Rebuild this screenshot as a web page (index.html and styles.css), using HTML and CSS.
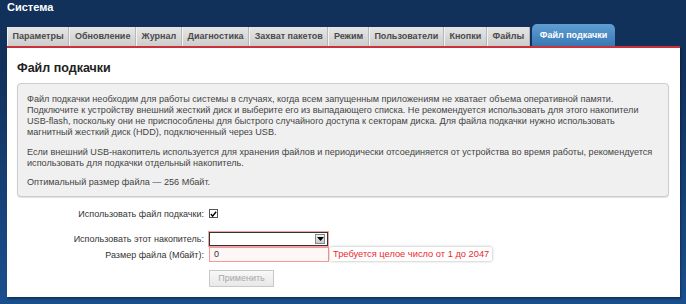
FILE: index.html
```html
<!DOCTYPE html>
<html lang="ru">
<head>
<meta charset="utf-8">
<title>Система</title>
<link rel="stylesheet" href="styles.css">
</head>
<body>
<div class="page">
  <h1 class="title">Система</h1>
  <nav class="tabs">
    <span class="tab">Параметры</span>
    <span class="tab">Обновление</span>
    <span class="tab">Журнал</span>
    <span class="tab">Диагностика</span>
    <span class="tab">Захват пакетов</span>
    <span class="tab">Режим</span>
    <span class="tab">Пользователи</span>
    <span class="tab">Кнопки</span>
    <span class="tab">Файлы</span>
    <span class="tab tab-active">Файл подкачки</span>
  </nav>
  <div class="panel">
    <h2 class="heading">Файл подкачки</h2>
    <div class="info">
      <p>Файл подкачки необходим для работы системы в случаях, когда всем запущенным приложениям не хватает объема оперативной памяти. Подключите к устройству внешний жесткий диск и выберите его из выпадающего списка. Не рекомендуется использовать для этого накопители USB-flash, поскольку они не приспособлены для быстрого случайного доступа к секторам диска. Для файла подкачки нужно использовать магнитный жесткий диск (HDD), подключенный через USB.</p>
      <p>Если внешний USB-накопитель используется для хранения файлов и периодически отсоединяется от устройства во время работы, рекомендуется использовать для подкачки отдельный накопитель.</p>
      <p>Оптимальный размер файла — 256 Мбайт.</p>
    </div>
    <div class="form">
      <div class="row row-check">
        <span class="label">Использовать файл подкачки:</span>
        <span class="checkbox"><svg width="8" height="8" viewBox="0 0 8 8"><path d="M1 4 L3 6.4 L7 1.4" fill="none" stroke="#000" stroke-width="1.6"/></svg></span>
      </div>
      <div class="row row-select">
        <span class="label">Использовать этот накопитель:</span>
        <span class="select"><span class="select-btn"><svg width="7" height="4" viewBox="0 0 7 4"><path d="M0 0 H7 L3.5 4 Z" fill="#000"/></svg></span></span>
      </div>
      <div class="row row-input">
        <span class="label">Размер файла (Мбайт):</span>
        <span class="field">
          <span class="input">0</span>
          <span class="tooltip">Требуется целое число от 1 до 2047</span>
        </span>
      </div>
      <div class="row row-button">
        <span class="label"></span>
        <span class="button">Применить</span>
      </div>
    </div>
  </div>
</div>
</body>
</html>
```

FILE: styles.css
```css
* { box-sizing: border-box; }
html, body { margin: 0; padding: 0; }
body {
  width: 686px;
  height: 304px;
  overflow: hidden;
  font-family: "Liberation Sans", Arial, sans-serif;
  background: linear-gradient(to bottom, #11305a 0px, #11305a 60px, #1a4f8e 304px);
}
.page {
  padding: 0 6px 0 7px;
  height: 304px;
  display: flex;
  flex-direction: column;
}
.title {
  margin: 0;
  font-size: 11px;
  font-weight: bold;
  color: #fff;
  line-height: 13px;
  padding-top: 1px;
  height: 24px;
}
.tabs {
  display: flex;
  align-items: flex-end;
  height: 22px;
}
.tab {
  height: 19px;
  line-height: 19px;
  padding: 0 4.6px;
  font-size: 9px;
  font-weight: bold;
  color: #4a4a4a;
  background: linear-gradient(to bottom, #e6e6e6, #cdcdcd);
  border-right: 1px solid #b8b8b8;
  border-left: 1px solid #f2f2f2;
  white-space: nowrap;
}
.tab-active {
  height: 22px;
  line-height: 22px;
  margin-left: 2px;
  padding: 0 8px;
  color: #fff;
  border: none;
  border-radius: 5px 5px 0 0;
  background: linear-gradient(to bottom, #5f9fd2, #3877b4);
}
.panel {
  flex: 0 0 auto;
  height: 251px;
  background: #fff;
  border-top: 2px solid #c9323a;
  box-shadow: 1px 2px 2px rgba(0,0,0,0.35);
  padding: 0 10px;
}
.heading {
  margin: 0;
  padding-top: 13px;
  height: 35px;
  font-size: 12.5px;
  font-weight: bold;
  color: #222;
  line-height: 15px;
}
.info {
  width: 652px;
  height: 114px;
  background: #f0f0f0;
  border: 1px solid #ccc;
  border-radius: 4px;
  box-shadow: 0 1px 1px rgba(0,0,0,0.12);
  padding: 10px 9px 0 9px;
  font-size: 9.1px;
  line-height: 11px;
  color: #444;
}
.info p { margin: 0 0 8px 0; }
.info p:first-child { margin-bottom: 9px; }
.form {
  padding-top: 9px;
  display: flex;
  flex-direction: column;
  font-size: 9px;
  color: #333;
}
.row {
  display: grid;
  grid-template-columns: 187px auto;
  column-gap: 5px;
  align-items: center;
}
.label { text-align: right; }
.row-check { height: 15px; }
.row-select { margin-top: 10px; height: 15px; }
.row-input { margin-top: 1px; height: 15px; }
.row-button { margin-top: 8px; height: 17px; }
.checkbox {
  width: 9px;
  height: 9px;
  border: 1px solid #555;
  background: #fff;
  display: flex;
  align-items: center;
  justify-content: center;
}
.select {
  width: 119px;
  height: 14px;
  border: 1px solid #333;
  outline: 1px solid #f2a4a4;
  background: #fff;
  display: flex;
  justify-content: flex-end;
  align-items: center;
  padding-right: 2px;
}
.select-btn {
  width: 10px;
  height: 10px;
  background: linear-gradient(#f0f0f0, #c8c8c8);
  border: 1px solid #888;
  display: flex;
  align-items: center;
  justify-content: center;
}
.field { position: relative; display: block; width: 120px; height: 15px; }
.input {
  display: block;
  width: 120px;
  height: 15px;
  border: 1px solid #f09a9a;
  background: #fff6f6;
  padding-left: 4px;
  line-height: 13px;
}
.tooltip {
  position: absolute;
  left: 121px;
  top: 0;
  white-space: nowrap;
  background: #fff;
  color: #e8292e;
  padding: 0 3px;
  height: 14px;
  line-height: 14px;
  border-radius: 2px;
  box-shadow: 0 0 3px rgba(0,0,0,0.35);
  font-size: 9.3px;
}
.button {
  width: 65px;
  height: 17px;
  border: 1px solid #c8c8c8;
  background: linear-gradient(#f8f8f8, #e8e8e8);
  color: #a8a8a8;
  text-align: center;
  line-height: 15px;
}
```
